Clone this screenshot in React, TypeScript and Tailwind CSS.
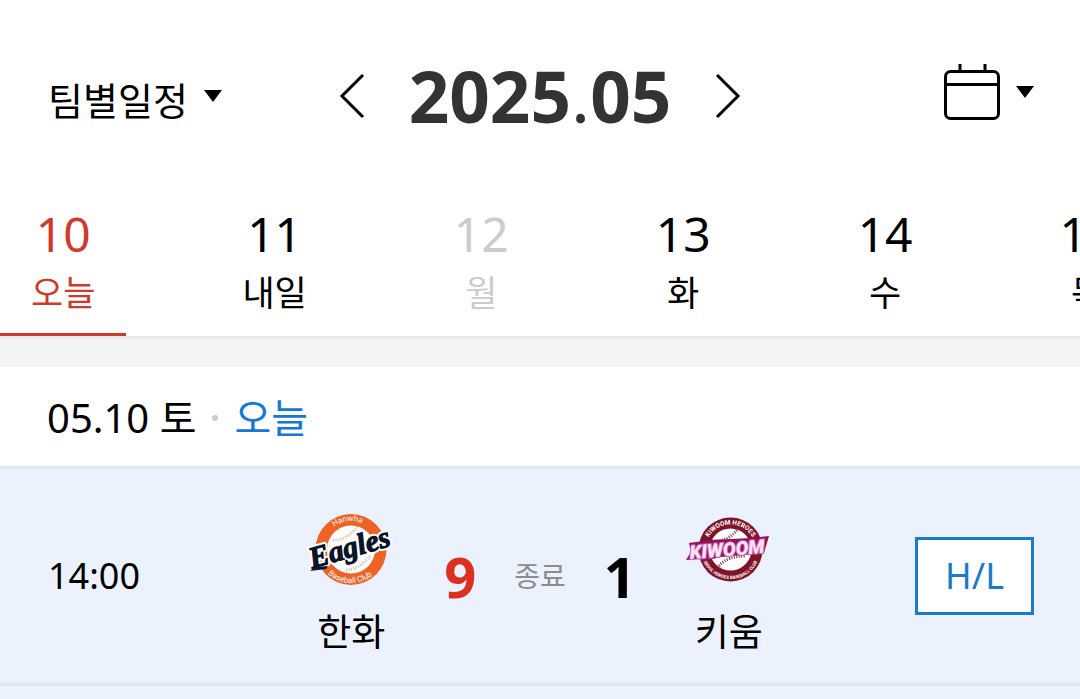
import React, { useState } from 'react';
import clsx from 'clsx';

interface Day {
  date: number;
  label: string;
  disabled?: boolean;
}

interface Team {
  name: string;
  score: number;
  logo: React.ReactNode;
}

const days: Day[] = [
  { date: 10, label: '오늘' },
  { date: 11, label: '내일' },
  { date: 12, label: '월', disabled: true },
  { date: 13, label: '화' },
  { date: 14, label: '수' },
  { date: 15, label: '목' },
];

function Caret() {
  return (
    <svg width="18" height="12" viewBox="0 0 18 12" aria-hidden="true">
      <path d="M0 0h18L9 12z" fill="currentColor" />
    </svg>
  );
}

function Chevron({ direction }: { direction: 'left' | 'right' }) {
  return (
    <svg width="26" height="46" viewBox="0 0 26 46" fill="none" stroke="currentColor" strokeWidth="3" aria-hidden="true">
      <path d={direction === 'left' ? 'M24 2 3 23l21 21' : 'M2 2l21 21L2 44'} />
    </svg>
  );
}

function CalendarIcon() {
  return (
    <svg width="56" height="56" viewBox="0 0 56 56" fill="none" stroke="currentColor" strokeWidth="3" aria-hidden="true">
      <rect x="1.5" y="7.5" width="53" height="47" rx="5" />
      <path d="M2 20.5h52M16 0v7M41 0v7" />
    </svg>
  );
}

function EaglesLogo() {
  return (
    <svg width="96" height="80" viewBox="0 0 96 80" aria-hidden="true">
      <defs>
        <path id="eagles-top" d="M20 39a28 28 0 0 1 56 0" />
        <path id="eagles-bottom" d="M14 39a34 34 0 0 0 68 0" />
      </defs>
      <circle cx="48" cy="39.5" r="35.5" fill="#ee6226" />
      <circle cx="48" cy="39.5" r="24" fill="#fff" />
      <g fill="none" stroke="#e9b495" strokeWidth="3" strokeDasharray="1 1.5">
        <path d="M30 30q14 0 24-13" />
        <path d="M43 60q14-1 25-15" />
      </g>
      <g fill="#fff" fontFamily="Roboto, sans-serif" fontSize="8" textAnchor="middle">
        <text><textPath href="#eagles-top" startOffset="46%">Hanwha</textPath></text>
        <text><textPath href="#eagles-bottom" startOffset="49%">Baseball Club</textPath></text>
      </g>
      <text
        x="47"
        y="47"
        transform="rotate(-16 48 40)"
        fontFamily="'Liberation Serif', serif"
        fontSize="30"
        fontWeight="700"
        fontStyle="italic"
        fill="#0b1428"
        stroke="#fff"
        strokeWidth="5"
        strokeLinejoin="round"
        paintOrder="stroke"
        textAnchor="middle"
      >
        Eagles
      </text>
      <text
        x="47"
        y="47"
        transform="rotate(-16 48 40)"
        fontFamily="'Liberation Serif', serif"
        fontSize="30"
        fontWeight="700"
        fontStyle="italic"
        fill="#0b1428"
        stroke="#0b1428"
        strokeWidth="1"
        textAnchor="middle"
        aria-hidden="true"
      >
        Eagles
      </text>
      <path d="m7 61 5-4 13-1-2 3Z" fill="#0b1428" />
    </svg>
  );
}

function KiwoomLogo() {
  return (
    <svg width="96" height="80" viewBox="0 0 96 80" aria-hidden="true">
      <defs>
        <path id="kiwoom-top" d="M24.5 39.5a25 25 0 0 1 50 0" />
        <path id="kiwoom-bottom" d="M20 39.5a29.5 29.5 0 0 0 59 0" />
      </defs>
      <circle cx="49.5" cy="39.5" r="32" fill="#7f1428" />
      <circle cx="49.5" cy="39.5" r="21" fill="#fff" />
      <g fill="none" stroke="#7a3038" strokeWidth="3" strokeDasharray="1 1.5">
        <path d="M31 31q16 1 25-11" />
        <path d="M38 56q8-10 27-10" />
      </g>
      <g fill="#fff" fontFamily="Roboto, sans-serif" fontWeight="700" textAnchor="middle">
        <text fontSize="6.5"><textPath href="#kiwoom-top" startOffset="50%">KIWOOM HEROES</textPath></text>
        <text fontSize="4.5"><textPath href="#kiwoom-bottom" startOffset="50%">SEOUL HEROES BASEBALL CLUB</textPath></text>
      </g>
      <path d="M8 33 30 30 70 28 88 26 83 43 40 47 23 51 19 49 5 50 10 42Z" fill="#8e1457" />
      <text
        x="46"
        y="46"
        transform="rotate(-5 47 39)"
        textAnchor="middle"
        fontFamily="Roboto, sans-serif"
        fontSize="19"
        fontWeight="900"
        fontStyle="italic"
        fill="#fbe3f5"
        stroke="#c656a8"
        strokeWidth="2"
        strokeLinejoin="round"
        paintOrder="stroke"
      >
        KIWOOM
      </text>
    </svg>
  );
}

function TeamBadge({ team }: { team: Team }) {
  return (
    <div className="flex w-24 flex-col items-center">
      {team.logo}
      <span className="mt-4 text-[37px] leading-[52px]">{team.name}</span>
    </div>
  );
}

const home: Team = { name: '한화', score: 9, logo: <EaglesLogo /> };
const away: Team = { name: '키움', score: 1, logo: <KiwoomLogo /> };

export default function App() {
  const [selected, setSelected] = useState(10);

  return (
    <div className="min-h-screen overflow-hidden bg-[#ebf2fe] font-['Noto_Sans','Noto_Sans_CJK_KR',sans-serif] text-black">
      {/* Month header */}
      <header className="grid grid-cols-[1fr_auto_1fr] items-center bg-white px-[46px] pt-14">
        <div className="flex items-center gap-4 pl-[2px]">
          <select aria-label="팀별일정" className="appearance-none bg-transparent pt-2 text-[38px] leading-[52px]">
            <option>팀별일정</option>
          </select>
          <Caret />
        </div>
        <div className="flex items-center gap-11">
          <button type="button" aria-label="이전 달">
            <Chevron direction="left" />
          </button>
          <h1 className="text-[71px] leading-[80px] font-bold text-[#333]">
            2025<span className="font-normal">.</span>05
          </h1>
          <button type="button" aria-label="다음 달">
            <Chevron direction="right" />
          </button>
        </div>
        <button type="button" aria-label="달력" className="flex items-center gap-4 justify-self-end pb-2">
          <CalendarIcon />
          <Caret />
        </button>
      </header>

      {/* Day tabs */}
      <nav className="flex gap-[85px] overflow-hidden border-b-3 border-[#e8e8e8] bg-white pt-[68px]">
        {days.map((day) => (
          <button
            key={day.date}
            type="button"
            disabled={day.disabled}
            onClick={() => setSelected(day.date)}
            className={clsx(
              'flex shrink-0 flex-col items-center gap-[5px] border-b-3 px-[31px] pb-4',
              day.date === selected ? 'border-[#d03a2b] text-[#d03a2b]' : 'border-transparent',
              day.disabled && 'text-[#ccc]'
            )}
          >
            <span className="text-[48px] leading-[60px]">{day.date}</span>
            <span className="text-[35px] leading-[48px]">{day.label}</span>
          </button>
        ))}
      </nav>

      <main className="border-t-28 border-[#f4f4f4]">
        <h2 className="flex items-center gap-4 border-b-3 border-[#e1e8f1] bg-white px-[47px] pt-[21px] pb-[18px] text-[40px] leading-[60px]">
          <span>05.10 토</span>
          <span className="size-[6px] rounded-full bg-[#ccc]" />
          <span className="text-[#1478d4]">오늘</span>
        </h2>

        {/* Game row */}
        <div className="grid grid-cols-[1fr_auto_1fr] items-center border-b-3 border-[#e1e7f2] px-[46px] pt-[41px] pb-[25px]">
          <time className="mb-4 pl-[2px] text-[36px] leading-[52px]">14:00</time>
          <div className="flex items-center gap-[45px]">
            <TeamBadge team={home} />
            <div className="mb-4 flex items-center gap-[38px]">
              <strong className="text-[56px] leading-[60px] text-[#dd2f20]">{home.score}</strong>
              <span className="text-[28px] leading-[40px] text-[#8c8c8c]">종료</span>
              <strong className="text-[56px] leading-[60px]">{away.score}</strong>
            </div>
            <TeamBadge team={away} />
          </div>
          <a
            href="#highlight"
            className="mb-4 justify-self-end border-3 border-[#1a7acb] bg-white px-[27px] py-[10px] text-[36px] leading-[52px] text-[#1a7acb]"
          >
            H/L
          </a>
        </div>
      </main>
    </div>
  );
}
